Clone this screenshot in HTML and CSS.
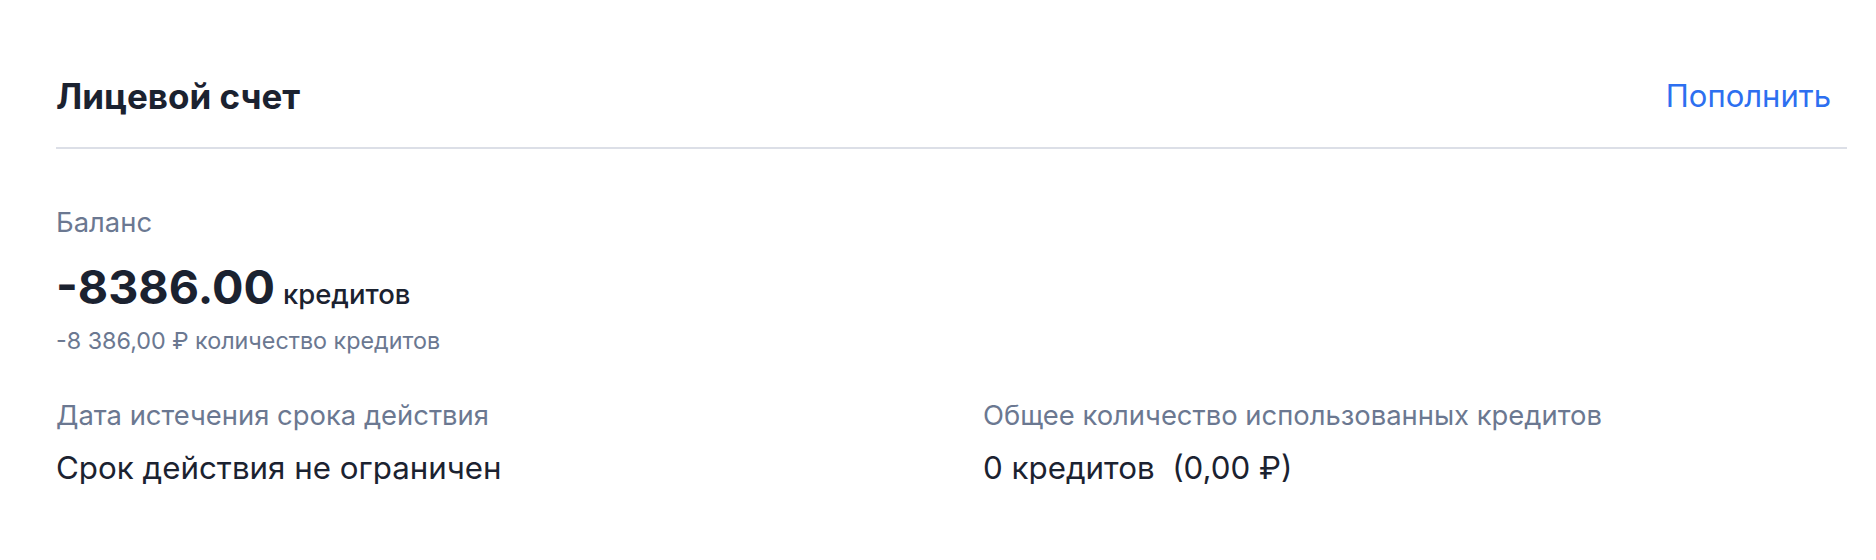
FILE: index.html
```html
<!DOCTYPE html>
<html lang="ru">
<head>
<meta charset="utf-8">
<title>Лицевой счет</title>
<link rel="stylesheet" href="styles.css">
</head>
<body>
<div class="page">
  <div class="header">
    <h1 class="title">Лицевой счет</h1>
    <a class="link" href="#">Пополнить</a>
  </div>
  <div class="balance">
    <div class="label">Баланс</div>
    <div class="amount"><span class="num">-8386.00</span> <span class="unit">кредитов</span></div>
    <div class="sub">-8 386,00 ₽ количество кредитов</div>
  </div>
  <div class="grid">
    <div class="cell">
      <div class="label">Дата истечения срока действия</div>
      <div class="value">Срок действия не ограничен</div>
    </div>
    <div class="cell">
      <div class="label">Общее количество использованных кредитов</div>
      <div class="value">0 кредитов&nbsp; (0,00 ₽)</div>
    </div>
  </div>
</div>
</body>
</html>
```

FILE: styles.css
```css
* { box-sizing: border-box; }
body {
  margin: 0;
  background: #ffffff;
  font-family: Inter, "Noto Sans", sans-serif;
  color: #1b2230;
}
.page {
  padding: 76px 29px 0 56px;
}
.header {
  display: flex;
  justify-content: space-between;
  align-items: center;
  padding: 0 16px 31px 0;
  border-bottom: 2px solid #dcdfe7;
}
.title {
  margin: 0;
  font-size: 35px;
  line-height: 40px;
  font-weight: 700;
  color: #1b2230;
}
.link {
  font-size: 31px;
  line-height: 38px;
  color: #2d6ff0;
  text-decoration: none;
}
.balance {
  padding-top: 58px;
}
.label {
  font-size: 27.4px;
  line-height: 30px;
  color: #6b7891;
}
.amount {
  margin-top: 22px;
  line-height: 56px;
  display: flex;
  align-items: baseline;
  gap: 8px;
}
.num {
  font-size: 46.7px;
  font-weight: 700;
  color: #1b2230;
}
.unit {
  font-size: 27.5px;
  font-weight: 500;
  color: #1b2230;
}
.sub {
  margin-top: 5px;
  font-size: 23.3px;
  line-height: 28px;
  color: #6b7891;
}
.grid {
  display: grid;
  grid-template-columns: 1fr 1fr;
  column-gap: 63px;
  padding-top: 45px;
}
.value {
  margin-top: 22px;
  font-size: 31.3px;
  line-height: 32px;
  color: #1b2230;
}
```
